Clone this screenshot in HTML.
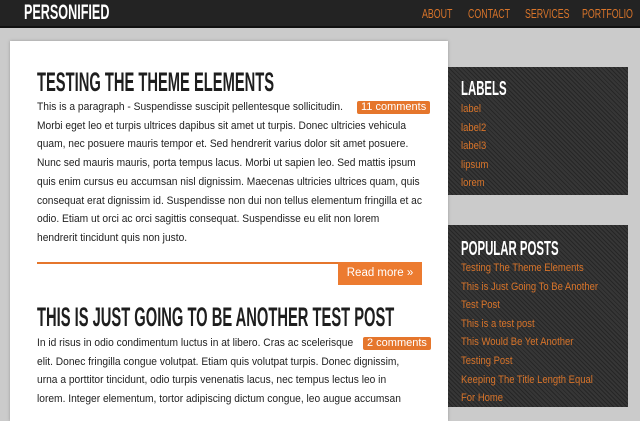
<!DOCTYPE html>
<html><head><style>
*{margin:0;padding:0}
body{width:640px;height:407px;overflow:hidden;background:#cbcbcb;font-family:"Liberation Sans",sans-serif;position:relative}
.hdr{position:absolute;left:0;top:0;width:640px;height:26px;background:#232323;border-bottom:2px solid #111}
.logo{position:absolute;left:24px;top:1px;color:#fff;font-weight:bold;font-size:21px;transform:scaleX(0.6);transform-origin:top left;white-space:nowrap}
.nav{position:absolute;top:6px;color:#d8742a;font-size:13px;transform:scaleX(0.68);transform-origin:top left;white-space:nowrap}
.main{position:absolute;left:10px;top:41px;width:438px;height:380px;background:#fff;box-shadow:0 0 3px #999}
.t{position:absolute;left:37px;font-weight:bold;font-size:27px;color:#1e1e1e;white-space:nowrap;transform:scaleX(0.545);transform-origin:top left}
.p{position:absolute;left:37px;font-size:11px;color:#222;line-height:18.7px;white-space:nowrap;transform:scaleX(0.93);transform-origin:top left}
.cm{position:absolute;background:#e5762c;color:#fff;font-size:11px;padding:0 4px;line-height:13px;border-radius:2px;white-space:nowrap}
.side{position:absolute;left:448px;width:180px;background:#2e2e2e;background-image:repeating-linear-gradient(45deg,#262626 0 1px,#363636 1px 3px)}
.sh{position:absolute;left:13px;color:#fff;font-weight:bold;font-size:20px;white-space:nowrap;transform:scaleX(0.57);transform-origin:top left}
.sl{position:absolute;left:13px;color:#d8742a;font-size:11px;line-height:18.6px;white-space:nowrap;transform:scaleX(0.86);transform-origin:top left}
</style></head><body>
<div class="hdr"><div class="logo">PERSONIFIED</div>
<div class="nav" style="left:422px">ABOUT</div>
<div class="nav" style="left:468px">CONTACT</div>
<div class="nav" style="left:525px">SERVICES</div>
<div class="nav" style="left:582px">PORTFOLIO</div></div>
<div class="main"></div>
<div class="t" style="top:67px">TESTING THE THEME ELEMENTS</div>
<div class="p" style="top:98px">This is a paragraph - Suspendisse suscipit pellentesque sollicitudin.<br>Morbi eget leo et turpis ultrices dapibus sit amet ut turpis. Donec ultricies vehicula<br>quam, nec posuere mauris tempor et. Sed hendrerit varius dolor sit amet posuere.<br>Nunc sed mauris mauris, porta tempus lacus. Morbi ut sapien leo. Sed mattis ipsum<br>quis enim cursus eu accumsan nisl dignissim. Maecenas ultricies ultrices quam, quis<br>consequat erat dignissim id. Suspendisse non dui non tellus elementum fringilla et ac<br>odio. Etiam ut orci ac orci sagittis consequat. Suspendisse eu elit non lorem<br>hendrerit tincidunt quis non justo.</div>
<div class="cm" style="left:357px;top:101px">11 comments</div>
<div style="position:absolute;left:37px;top:262px;width:385px;height:2px;background:#e5762c"></div>
<div style="position:absolute;left:338px;top:262px;width:84px;height:23px;background:#ec7b30;color:#fff;font-size:11.5px;line-height:23px;text-align:center">Read more »</div>
<div class="t" style="top:302px">THIS IS JUST GOING TO BE ANOTHER TEST POST</div>
<div class="p" style="top:334px">In id risus in odio condimentum luctus in at libero. Cras ac scelerisque<br>elit. Donec fringilla congue volutpat. Etiam quis volutpat turpis. Donec dignissim,<br>urna a porttitor tincidunt, odio turpis venenatis lacus, nec tempus lectus leo in<br>lorem. Integer elementum, tortor adipiscing dictum congue, leo augue accumsan</div>
<div class="cm" style="left:363px;top:337px">2 comments</div>
<div class="side" style="top:67px;height:128px"><div class="sh" style="top:11px">LABELS</div>
<div class="sl" style="top:33px">label<br>label2<br>label3<br>lipsum<br>lorem</div></div>
<div class="side" style="top:225px;height:182px"><div class="sh" style="top:13px">POPULAR POSTS</div>
<div class="sl" style="top:34px">Testing The Theme Elements<br>This is Just Going To Be Another<br>Test Post<br>This is a test post<br>This Would Be Yet Another<br>Testing Post<br>Keeping The Title Length Equal<br>For Home</div></div>
</body></html>
